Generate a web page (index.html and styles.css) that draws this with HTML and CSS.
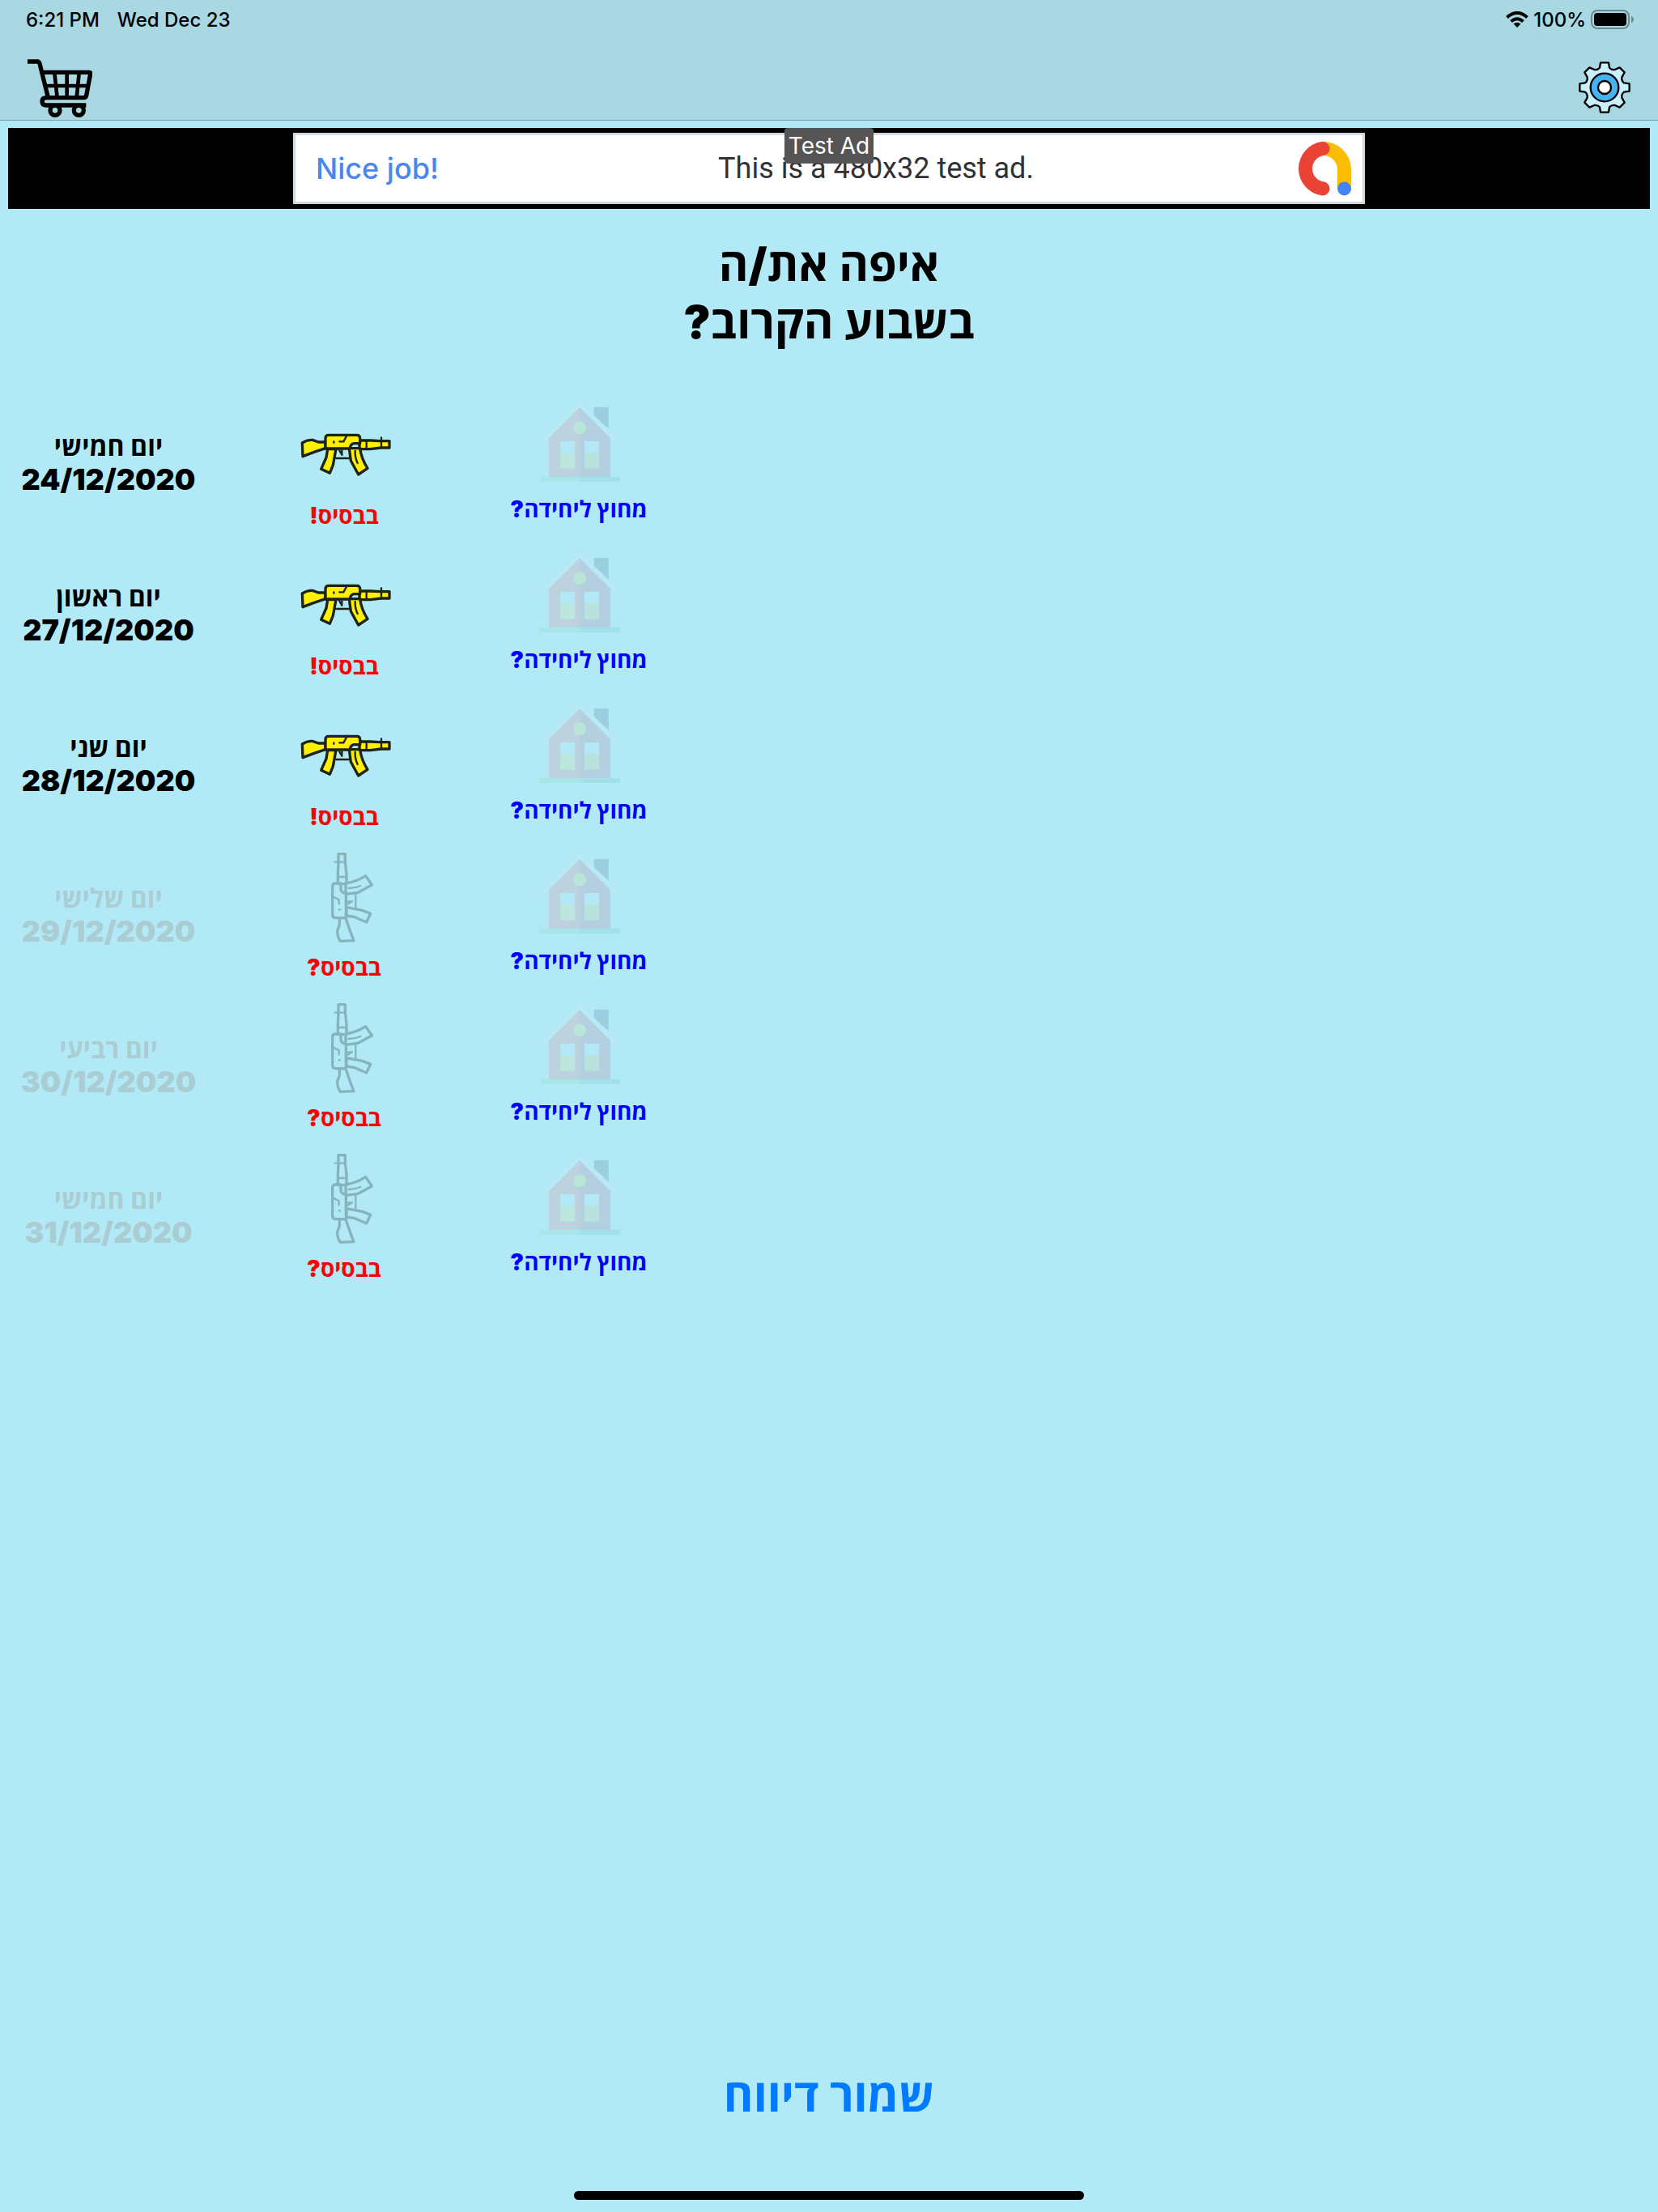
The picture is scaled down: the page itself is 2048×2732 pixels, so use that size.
FILE: index.html
```html
<!DOCTYPE html>
<html lang="he">
<head>
<meta charset="utf-8">
<meta name="viewport" content="width=device-width, initial-scale=1">
<title>איפה את/ה בשבוע הקרוב?</title>
<link rel="stylesheet" href="styles.css">
</head>
<body>
<svg class="sprite" aria-hidden="true">
  <symbol id="rifle" viewBox="45 -57 360 360">
    <g id="rifle-shape" stroke-width="10" stroke-linejoin="round" stroke-linecap="round">
      <path d="M70 114 Q88 102 108 103 L130 111 H156 V134 Q112 148 72 164 Z"/>
      <path d="M282 105 H324 L357 107 H393 V132 H362 L322 137 H282 Z"/>
      <path d="M164 137 L159 168 L140 211 L172 226 L184 196 L195 137 Z"/>
      <path d="M244 134 L250 180 L278 231 L312 208 Q289 172 284 134 Z"/>
      <path d="M156 135 V97 Q156 85 168 85 H272 Q284 85 284 97 V116 H262 Q248 118 247 135 Z"/>
      <path class="line" d="M195 171 H243 M207 141 L217 158 M217 158 V142 M266 144 Q265 168 275 189 M234 89 L223 109 H208 M187 109 V113 M308 107 V134 M363 94 V130"/>
    </g>
  </symbol>
  <symbol id="rifle-up" viewBox="45 57 360 360">
    <use href="#rifle-shape" transform="translate(97 470) rotate(-90)"/>
  </symbol>
  <symbol id="house" viewBox="165 33 360 336">
    <path fill="#9bcfe0" d="M401 72 H455 V152 L401 102 Z"/>
    <path fill="#bcd2de" d="M348 73 L234 186 V330 H348 Z"/>
    <path fill="#b4cfdf" d="M348 73 L462 186 V330 H348 Z"/>
    <path fill="none" stroke="#b9e9f5" stroke-width="14" d="M205 203 L348 62 L491 203"/>
    <circle cx="348" cy="148" r="24" fill="#bae6da"/>
    <path fill="#b3e8f6" d="M276 198 H330 V242 H276 Z M366 198 H420 V242 H366 Z"/>
    <path fill="#bbe7dc" d="M276 242 H330 V299 H276 Z"/>
    <path fill="#b9e2dc" d="M366 242 H420 V299 H366 Z"/>
    <path fill="#a7e7e9" d="M198 330 H348 V348 H198 Z"/>
    <path fill="#a0e1ea" d="M348 330 H498 V348 H348 Z"/>
  </symbol>
</svg>

<header class="top">
  <div class="status">
    <span>6:21 PM</span>
    <span>Wed Dec 23</span>
    <span class="status-right">
      <svg class="wifi" viewBox="0 0 28 20" fill="none" stroke="#000" stroke-width="4"><path d="M1.500 7.500 Q14 -3.500 26.500 7.500 M6.500 12.500 Q14 6 21.500 12.500"/><path fill="#000" stroke="none" d="M9.500 15.500 Q14 12 18.500 15.500 L14 20 Z"/></svg>
      <span>100%</span>
      <svg class="battery" viewBox="0 0 54 24"><rect x="1" y="1" width="46" height="22" rx="7" fill="none" stroke="#6b8a91" stroke-width="2"/><rect x="4" y="4" width="40" height="16" rx="4"/><path fill="#6b8a91" d="M50 8 Q53 9 53 12 Q53 15 50 16 Z"/></svg>
    </span>
  </div>
  <nav class="tools">
    <button class="tool" type="button" aria-label="חנות">
      <svg class="cart" viewBox="0 0 240 219" fill="none" stroke="#000" stroke-width="16" stroke-linejoin="round"><path d="M0 12 H36 Q43 12 45 20 L77 148"/><path d="M53 52 H229 Q234 52 233 58 L218 138 Q216 146 206 146 H70 Q54 146 54 160 Q54 174 68 174 H217"/><path stroke-width="14" d="M66 102 H224 M100 54 L110 146 M146 54 V146 M191 54 L182 146"/><circle cx="102" cy="193" r="18"/><circle cx="190" cy="193" r="18"/></svg>
    </button>
    <button class="tool" type="button" aria-label="הגדרות">
      <svg class="gear" viewBox="330 231 192 192" stroke="#000" stroke-width="7" stroke-linejoin="round"><path fill="#c9f1fd" d="M411 235 H441 L444 254 Q452 263 464 261 L482 253 L500 271 L490 289 Q488 302 498 310 L518 313 V341 L498 344 Q488 352 490 365 L500 383 L482 401 L464 393 Q452 391 444 400 L441 419 H411 L408 400 Q400 391 388 393 L370 401 L352 383 L362 365 Q364 352 354 344 L334 341 V313 L354 310 Q364 302 362 289 L352 271 L370 253 L388 261 Q400 263 408 254 Z"/><circle cx="426" cy="327" r="52" fill="#46b2f2"/><circle cx="426" cy="327" r="24" fill="#fff"/></svg>
    </button>
  </nav>
</header>

<aside class="ad">
  <span class="ad-badge">Test Ad</span>
  <a class="ad-card" href="#">
    <span class="ad-lead">Nice job!</span>
    <span class="ad-text">This is a 480x32 test ad.</span>
    <svg class="ad-logo" viewBox="0 0 67 67" fill="none" stroke-width="17" stroke-linecap="round"><path stroke="#fbbc04" stroke-linecap="butt" d="M32 8.500 A26 26 0 0 1 58.500 34 V58"/><path stroke="#ea4335" d="M32 8.500 A25 25 0 0 0 32 58"/><circle cx="58.500" cy="58" r="8.500" fill="#4285f4"/></svg>
  </a>
</aside>

<main class="main">
  <h1 class="title" dir="rtl">איפה את<span class="mark">/</span>ה<br>בשבוע הקרוב<span class="mark">?</span></h1>
  <ul class="days">
    <li class="day">
      <div class="date"><span dir="rtl">יום חמישי</span><time datetime="2020-12-24">24/12/2020</time></div>
      <button class="choice base on" type="button" aria-pressed="true" dir="rtl"><svg class="rifle"><use href="#rifle"/></svg><span>בבסיס<span class="mark">!</span></span></button>
      <button class="choice out" type="button" aria-pressed="false" dir="rtl"><svg class="house"><use href="#house"/></svg><span>מחוץ ליחידה<span class="mark">?</span></span></button>
    </li>
    <li class="day">
      <div class="date"><span dir="rtl">יום ראשון</span><time datetime="2020-12-27">27/12/2020</time></div>
      <button class="choice base on" type="button" aria-pressed="true" dir="rtl"><svg class="rifle"><use href="#rifle"/></svg><span>בבסיס<span class="mark">!</span></span></button>
      <button class="choice out" type="button" aria-pressed="false" dir="rtl"><svg class="house"><use href="#house"/></svg><span>מחוץ ליחידה<span class="mark">?</span></span></button>
    </li>
    <li class="day">
      <div class="date"><span dir="rtl">יום שני</span><time datetime="2020-12-28">28/12/2020</time></div>
      <button class="choice base on" type="button" aria-pressed="true" dir="rtl"><svg class="rifle"><use href="#rifle"/></svg><span>בבסיס<span class="mark">!</span></span></button>
      <button class="choice out" type="button" aria-pressed="false" dir="rtl"><svg class="house"><use href="#house"/></svg><span>מחוץ ליחידה<span class="mark">?</span></span></button>
    </li>
    <li class="day">
      <div class="date unset"><span dir="rtl">יום שלישי</span><time datetime="2020-12-29">29/12/2020</time></div>
      <button class="choice base" type="button" aria-pressed="false" dir="rtl"><svg class="rifle"><use href="#rifle-up"/></svg><span>בבסיס<span class="mark">?</span></span></button>
      <button class="choice out" type="button" aria-pressed="false" dir="rtl"><svg class="house"><use href="#house"/></svg><span>מחוץ ליחידה<span class="mark">?</span></span></button>
    </li>
    <li class="day">
      <div class="date unset"><span dir="rtl">יום רביעי</span><time datetime="2020-12-30">30/12/2020</time></div>
      <button class="choice base" type="button" aria-pressed="false" dir="rtl"><svg class="rifle"><use href="#rifle-up"/></svg><span>בבסיס<span class="mark">?</span></span></button>
      <button class="choice out" type="button" aria-pressed="false" dir="rtl"><svg class="house"><use href="#house"/></svg><span>מחוץ ליחידה<span class="mark">?</span></span></button>
    </li>
    <li class="day">
      <div class="date unset"><span dir="rtl">יום חמישי</span><time datetime="2020-12-31">31/12/2020</time></div>
      <button class="choice base" type="button" aria-pressed="false" dir="rtl"><svg class="rifle"><use href="#rifle-up"/></svg><span>בבסיס<span class="mark">?</span></span></button>
      <button class="choice out" type="button" aria-pressed="false" dir="rtl"><svg class="house"><use href="#house"/></svg><span>מחוץ ליחידה<span class="mark">?</span></span></button>
    </li>
  </ul>
</main>

<footer class="foot">
  <button class="save" type="button" dir="rtl">שמור דיווח</button>
  <div class="home-bar"></div>
</footer>
</body>
</html>
```
FILE: styles.css
```css
* { box-sizing: border-box; }

body {
  margin: 0;
  min-height: 100vh;
  display: flex;
  flex-direction: column;
  background: #b1eaf6;
  color: #000;
  font-family: Inter, "Open Sans", "Liberation Sans", sans-serif;
}

button {
  padding: 0;
  border: 0;
  background: none;
  font: inherit;
  color: inherit;
}

.sprite { display: none; }

/* Status and tool bar */
.top {
  height: 149px;
  background: #a9d7e2;
  border-bottom: 1px solid #7c9fa7;
}

.status {
  display: flex;
  align-items: center;
  gap: 22px;
  height: 48px;
  padding: 0 29px 0 32px;
  font-size: 24px;
  font-weight: 500;
}

.status-right {
  display: flex;
  align-items: center;
  gap: 6px;
  margin-left: auto;
}

.wifi { width: 28px; height: 20px; }
.battery { width: 54px; height: 24px; }

.tools {
  display: flex;
  justify-content: space-between;
  align-items: center;
  height: 100px;
  padding: 20px 34px 0;
}

.tool { display: flex; }
.cart { width: 80px; height: 73px; }
.gear { width: 64px; height: 64px; }

/* Ad banner */
.ad {
  position: relative;
  display: flex;
  justify-content: center;
  margin: 9px 10px 0;
  padding: 6px;
  background: #000;
}

.ad-card {
  display: flex;
  align-items: center;
  justify-content: space-between;
  width: 1324px;
  height: 88px;
  padding: 0 14px 0 25px;
  border: 3px solid #d0d9e0;
  background: #fff;
  color: #303236;
  font-size: 36px;
  text-decoration: none;
}

.ad-lead {
  min-width: 172px;
  color: #4a86ee;
  font-weight: 500;
}

.ad-text { font-family: Roboto, sans-serif; }
.ad-logo { width: 67px; height: 67px; }

.ad-badge {
  position: absolute;
  top: 0;
  left: 50%;
  width: 110px;
  height: 44px;
  margin-left: -55px;
  border-radius: 4px;
  background: #555;
  color: #fff;
  font-size: 28px;
  line-height: 44px;
  text-align: center;
}

/* Weekly report */
.title {
  margin: 34px 0 56px;
  font-size: 56px;
  line-height: 71px;
  font-weight: 700;
  text-align: center;
}

.mark { font-weight: 900; }

.days {
  margin: 0;
  padding: 0;
  list-style: none;
}

.day {
  display: grid;
  grid-template-columns: 268px 314px 266px;
  height: 186px;
}

.date {
  display: flex;
  flex-direction: column;
  align-items: center;
  padding-top: 42px;
  font-size: 32px;
  line-height: 40px;
  font-weight: 700;
}

.date time { font-size: 36px; font-weight: 900; }
.unset { color: #aacdd4; }

.choice {
  display: flex;
  flex-direction: column;
  align-items: center;
  gap: 7px;
  font-size: 28px;
  line-height: 40px;
  font-weight: 700;
}

.base { color: #f00; }
.out { color: #00f; }

.rifle {
  width: 120px;
  height: 120px;
  fill: none;
  stroke: #86b4bd;
}

.on .rifle { fill: #fff000; stroke: #1c2418; }
.line { fill: none; stroke-width: 7px; }
.house { width: 120px; height: 112px; }

/* Save action */
.foot {
  display: flex;
  flex-direction: column;
  align-items: center;
  gap: 82px;
  margin-top: auto;
  padding-bottom: 15px;
}

.save {
  color: #007aff;
  font-size: 56px;
  line-height: 72px;
  font-weight: 700;
}

.home-bar {
  width: 630px;
  height: 11px;
  border-radius: 6px;
  background: #000;
}
```
